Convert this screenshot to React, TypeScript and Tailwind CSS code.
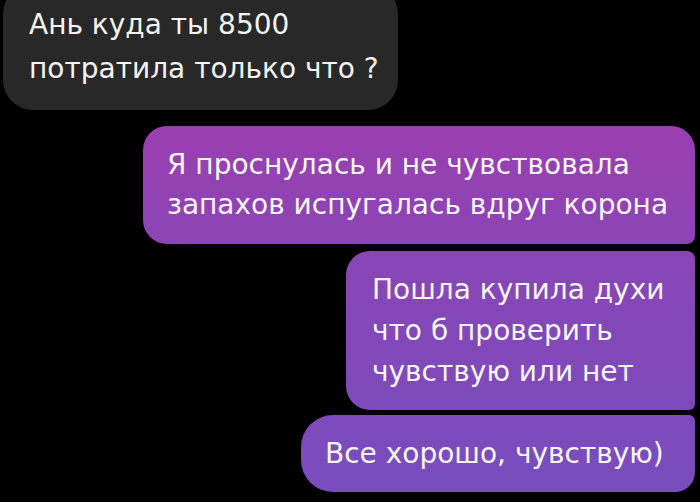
const purple = "bg-fixed bg-[linear-gradient(180deg,#a63aac_0%,#9a3fb0_25%,#8746b6_55%,#774dbe_100%)]";

export default function App() {
  return (
    <div className="h-[502px] w-[700px] overflow-hidden bg-black font-['DejaVu_Sans',sans-serif] text-[28px] text-[#f5f5f5]">
      <div className="flex flex-col items-end pr-[5px]">
        {/* incoming */}
        <div className="-mt-[16px] ml-[3px] w-[395px] self-start rounded-[30px] bg-[#282828] px-[26px] py-[19px] leading-[44px] whitespace-nowrap">
          <div>Ань куда ты 8500</div>
          <div>потратила только что ?</div>
        </div>

        {/* outgoing */}
        <div className={`mt-[16px] w-[552px] rounded-[24px] rounded-br-[8px] py-[19px] pl-[24px] leading-[40px] whitespace-nowrap ${purple}`}>
          <div>Я проснулась и не чувствовала</div>
          <div>запахов испугалась вдруг корона</div>
        </div>
        <div className={`mt-[7px] w-[349px] rounded-[24px] rounded-tr-[8px] rounded-br-[6px] py-[18px] pl-[26px] leading-[41px] whitespace-nowrap ${purple}`}>
          <div>Пошла купила духи</div>
          <div>что б проверить</div>
          <div>чувствую или нет</div>
        </div>
        <div className={`mt-[5px] w-[394px] rounded-[32px] rounded-tr-[6px] rounded-br-[20px] py-[18px] pl-[24px] leading-[41px] whitespace-nowrap ${purple}`}>
          <div>Все хорошо, чувствую)</div>
        </div>
      </div>
    </div>
  );
}
